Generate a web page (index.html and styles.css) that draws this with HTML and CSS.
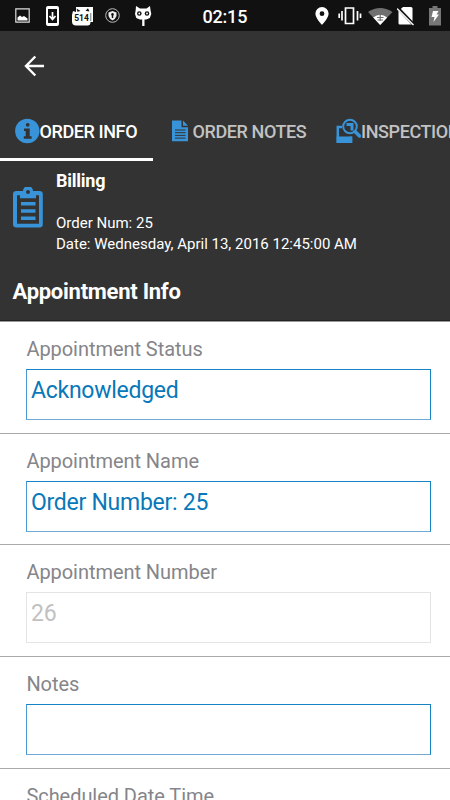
FILE: index.html
```html
<!DOCTYPE html>
<html lang="en">
<head>
<meta charset="utf-8">
<title>Order Info</title>
<link rel="stylesheet" href="styles.css">
</head>
<body>
<div class="status">
  <div class="status-left">
    <svg width="16" height="20" viewBox="0 0 16 20"><path d="M.8 2.800h13.400v13.400H.8z" fill="none" stroke="#ddd" stroke-width="1.200"/><path d="M2.500 14.500v-3l2.500-2 2 1.500 2-1 3.500 2.500v2z" fill="#fff"/></svg>
    <svg width="14" height="20" viewBox="0 0 14 20"><path fill="#fff" fill-rule="evenodd" d="M2 0h9q2 0 2 2v16q0 2-2 2H2q-2 0-2-2V2q0-2 2-2zM2 3v14h9V3z"/><path d="M6.500 6v7M3.500 10l3 3.500 3-3.500" fill="none" stroke="#fff" stroke-width="1.700"/></svg>
    <svg class="calendar" width="22" height="20" viewBox="0 0 22 20"><path fill="#fff" d="M4 1h17v15h-2.500q0 3.500-3 3.500H4Q0 19.500 0 15.500V9l1-4 3 1z"/><path fill="#111" d="M4.500 2.500l4 2.500-3 .8zM16 2.200l1.500 3.300-4-.7z"/><path d="M18.800 7v8" stroke="#111" stroke-width=".6"/><text class="badge-number" x="9.500" y="15" text-anchor="middle">514</text></svg>
    <svg width="16" height="20" viewBox="0 0 16 20"><circle cx="7.500" cy="9.500" r="6.800" fill="none" stroke="#bbb" stroke-width="1"/><path fill="#eee" d="M7.500 5l4 1.500v3.500q-1 3-4 4.500-3-1.500-4-4.500V6.500z"/><path fill="#111" d="M7.500 7a1.500 1.500 0 0 1 .7 2.700v2.300H6.800V9.700A1.500 1.500 0 0 1 7.500 7z"/></svg>
    <svg class="cat" width="17" height="20" viewBox="0 0 17 20"><path fill="#fff" d="M1 0l4 2.500h6.500L15 0l.5 4 .8 4-1.500 4-3.500 1.500H9.500V20H7.200v-6.500H4.800L1.300 12 0 8l.7-4z"/><g fill="#111"><circle cx="4.300" cy="7.500" r="2.300"/><circle cx="12" cy="7.500" r="2.300"/></g><g fill="#fff"><circle cx="4.300" cy="7.500" r=".9"/><circle cx="12" cy="7.500" r=".9"/></g></svg>
  </div>
  <div class="clock">02:15</div>
  <div class="status-right">
    <svg width="14" height="20" viewBox="0 0 14 20"><path fill="#fff" fill-rule="evenodd" d="M7 1a6.600 6.600 0 0 1 6.600 6.600C13.600 12.500 7 19 7 19S.4 12.500.4 7.600A6.600 6.600 0 0 1 7 1zm0 4.300a2.400 2.400 0 1 0 0 4.800 2.400 2.400 0 0 0 0-4.800z"/></svg>
    <svg width="24" height="20" viewBox="0 0 24 20"><path d="M7.500 2h8v15.500h-8zM4 5v9.500M19.500 5v9.500M1.200 7.500v4.500M22.500 7.500v4.500" fill="none" stroke="#fff" stroke-width="1.700"/></svg>
    <svg width="25" height="20" viewBox="0 0 25 20"><path fill="#707070" d="M0 6Q12 -2 24.500 6L12.200 19z"/><path fill="#fff" d="M5.200 11.500q7-5.500 14 0L12.200 19z"/><path d="M12.200 8v7M9 11.500h6.500M9.500 14h5.500" stroke="#707070" stroke-width="1.200"/></svg>
    <svg width="18" height="20" viewBox="0 0 18 20"><path fill="#fff" d="M6 1h8q1.500 0 1.500 1.500v16H2.800q-1.300 0-1.300-1.500V5z"/><path d="M0 1l17.500 18.500" stroke="#111" stroke-width="3"/><path d="M0 2.500l16.500 16.500" stroke="#fff" stroke-width="1.300"/></svg>
    <svg width="13" height="20" viewBox="0 0 13 20"><path fill="#777" d="M3.500 0h5v2H12v17.500H0V2h3.500z"/><path fill="#fff" d="M4 5h5.500L7.500 8.500H10L4.500 16l1-5H2.500z"/></svg>
  </div>
</div>
<header class="header">
  <div class="toolbar"><svg width="22" height="22" viewBox="0 0 22 22"><path d="M11.300 1.500L2 11l9.300 9.500M2 11h18" fill="none" stroke="#fff" stroke-width="2.400"/></svg></div>
  <nav class="tabs">
    <div class="tab active">
      <svg width="25" height="26" viewBox="0 0 25 26"><circle cx="12.300" cy="13" r="12.200" fill="#3893d8"/><path fill="#333" d="M9 10.500h5.700v7.800h1.900v2.400H8.800v-2.400h1.900v-5.400H9z"/><circle cx="12.700" cy="6.800" r="1.900" fill="#333"/></svg><span>ORDER INFO</span>
    </div>
    <div class="tab notes-tab">
      <svg width="18" height="22" viewBox="0 0 18 22"><path fill="#3893d8" d="M0 .5h9.500v6.800H16v14H0zM11 .5l5 5.300h-5z"/><path d="M3 10h10.500M3 12.700h10.500M3 15.400h10.500M3 18.100h10.500" stroke="#333" stroke-width="1"/></svg><span>ORDER NOTES</span>
    </div>
    <div class="tab inspection-tab">
      <svg width="26" height="26" viewBox="0 0 26 26"><path d="M6 9H1.800v14.500h13.200v-5" fill="none" stroke="#3893d8" stroke-width="2.500"/><path fill="#3893d8" d="M.6 18.500H16.200V25H.6z"/><circle cx="14" cy="8.500" r="8" fill="#333"/><circle cx="14" cy="8.500" r="6.800" fill="none" stroke="#3893d8" stroke-width="2"/><path d="M10.500 6.500H16v6" fill="none" stroke="#3893d8" stroke-width="3"/><path d="M19 13.500l4.500 4.500" stroke="#3893d8" stroke-width="3.500" stroke-linecap="round"/></svg><span>INSPECTIONS</span>
    </div>
  </nav>
  <section class="order">
    <svg width="30" height="41" viewBox="0 0 30 41"><path fill="#3893d8" fill-rule="evenodd" d="M3.500 4H10a5 5 0 0 1 10 0h6.500q3.300 0 3.300 3.300v30q0 3.200-3.300 3.200h-23Q0 40.500 0 37.300v-30Q0 4 3.500 4zM4 8.200v28.500h22V8.200h-3v3H7v-3zM15 3a2 2 0 1 0 0 4 2 2 0 0 0 0-4z"/><path d="M8 16.800h14.500M8 24h14.500M8 31.300h14.500" stroke="#3893d8" stroke-width="3.500"/></svg>
    <div class="order-text">
      <div class="order-title">Billing</div>
      <div class="order-line number">Order Num: 25</div>
      <div class="order-line date">Date: Wednesday, April 13, 2016 12:45:00 AM</div>
    </div>
  </section>
  <h1 class="heading">Appointment Info</h1>
</header>
<main class="form">
  <div class="field"><div class="label">Appointment Status</div><div class="input">Acknowledged</div></div>
  <div class="field"><div class="label">Appointment Name</div><div class="input">Order Number: 25</div></div>
  <div class="field"><div class="label">Appointment Number</div><div class="input disabled">26</div></div>
  <div class="field"><div class="label">Notes</div><div class="input"></div></div>
  <div class="field"><div class="label">Scheduled Date Time</div><div class="input"></div></div>
</main>
</body>
</html>
```
FILE: styles.css
```css
* { box-sizing: border-box; }
body { margin: 0; width: 450px; height: 800px; overflow: hidden; background: #fff; font-family: Roboto, sans-serif; display: flex; flex-direction: column; }
svg { display: block; flex: none; }
.status { height: 31px; flex: none; background: #111; color: #fff; display: grid; grid-template-columns: 202.500px 112.500px 1fr; padding-top: 6px; }
.status-left { display: flex; gap: 15px; padding-left: 15px; }
.status-left .calendar { margin-left: -3px; margin-right: -4px; }
.status-left .cat { margin-left: -1.500px; }
.badge-number { font: bold 8.500px Roboto, sans-serif; fill: #111; }
.clock { font-size: 18px; letter-spacing: -.2px; font-weight: 500; line-height: 21px; }
.status-right { display: flex; }
.status-right svg:nth-child(2) { margin-left: 9px; }
.status-right svg:nth-child(3) { margin-left: 6px; }
.status-right svg:nth-child(4) { margin-left: 4px; }
.status-right svg:nth-child(5) { margin-left: 13.500px; }
.header { flex: none; height: 290px; background: #333; color: #fff; border-bottom: 1px solid #222; }
.toolbar { height: 71px; padding: 24px 0 0 23.500px; }
.tabs { display: flex; height: 59px; overflow: hidden; }
.tab { flex: none; display: flex; align-items: center; height: 59px; font-size: 18px; letter-spacing: -.4px; font-weight: 500; color: #c2c2c2; white-space: nowrap; }
.tab.active { width: 153px; padding-left: 15px; color: #fff; border-bottom: 3px solid #fff; padding-top: 2px; }
.tab.active span { margin-left: -.5px; }
.notes-tab { width: 183px; padding-left: 19px; padding-bottom: 1px; }
.notes-tab span { margin-left: 2.500px; }
.inspection-tab { padding-bottom: 1px; }
.inspection-tab span { margin-left: -1px; }
.order { height: 102px; display: flex; gap: 13px; padding-left: 13px; }
.order svg { margin-top: 26px; }
.order-title { font-size: 18px; letter-spacing: -.25px; font-weight: 700; line-height: 22px; margin-top: 9px; }
.order-line { font-size: 15px; line-height: 21px; white-space: nowrap; }
.number { margin-top: 20.500px; }
.date { line-height: 20px; }
.heading { margin: 14px 0 0 12.500px; font-size: 22px; letter-spacing: -.27px; line-height: 30px; font-weight: 700; }
.form { flex: none; border-top: 1px solid #999; }
.field { height: 111.700px; padding: 14px 19px 0 26px; border-bottom: 1px solid #aaa; }
.label { color: #85858a; font-size: 20px; letter-spacing: -.05px; line-height: 26px; white-space: nowrap; padding-left: .4px; }
.input { height: 51px; margin-top: 7px; padding: 4px; border: 1px solid #1683c2; border-bottom-color: #70a9d6; border-left-color: #4b98d0; color: #0878b8; font-size: 23px; letter-spacing: -.27px; line-height: 33.500px; white-space: nowrap; }
.input.disabled { border-color: #e4e4e4; color: #c1c1c1; }
```
